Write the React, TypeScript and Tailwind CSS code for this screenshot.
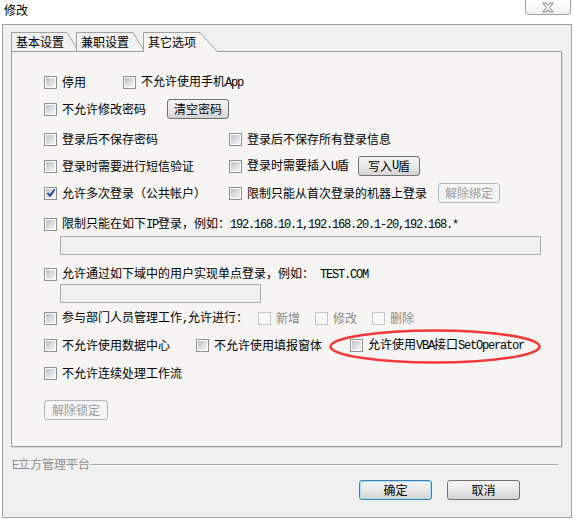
import clsx from "clsx"
import type { ReactNode } from "react"

// half-width latin, like the old bitmap font in the dialog
function M({ children }: { children: ReactNode }) {
  return <span className="font-['Liberation_Mono',monospace] text-[12px] tracking-[-1.2px]">{children}</span>
}

function Box({ checked, disabled }: { checked?: boolean; disabled?: boolean }) {
  if (disabled) {
    return <span className="block h-[13px] w-[13px] shrink-0 border border-[#c6c6c6] bg-[#f8f8f8]" />
  }
  return (
    <span className="relative flex h-[13px] w-[13px] shrink-0 items-center justify-center border border-[#8e8f8f] bg-white">
      <span className="block h-[9px] w-[9px] bg-linear-to-br from-[#b9bdc2] via-[#dcdde0] to-[#f5f5f5]" />
      {checked && (
        <svg className="absolute left-[1px] top-[0px]" width="10" height="10" viewBox="0 0 10 10">
          <path d="M1.5 5 L4 7.8 L8.8 1.2" fill="none" stroke="#1f3f9e" strokeWidth="1.8" />
        </svg>
      )}
    </span>
  )
}

function Check({ label, checked, disabled, className }: { label: ReactNode; checked?: boolean; disabled?: boolean; className?: string }) {
  return (
    <div className={clsx("flex shrink-0 items-center gap-[5px]", className)}>
      <Box checked={checked} disabled={disabled} />
      <span className={clsx("whitespace-nowrap", disabled ? "text-[#8a8a8a]" : "text-black")}>{label}</span>
    </div>
  )
}

function Btn({ children, disabled, primary, className }: { children: ReactNode; disabled?: boolean; primary?: boolean; className?: string }) {
  return (
    <div
      className={clsx(
        "flex h-[20px] shrink-0 items-center justify-center rounded-[3px] border text-[12px]",
        disabled
          ? "border-[#b4b7b9] bg-[#f4f4f4] text-[#9d9d9d]"
          : "bg-linear-to-b from-[#f4f4f4] via-[#e9e9e9] to-[#d3d3d3] text-black",
        !disabled && (primary ? "border-[#3c7fb1] shadow-[inset_0_0_0_1px_#a9dcf6]" : "border-[#707070]"),
        className,
      )}
    >
      {children}
    </div>
  )
}

function Tab({ label, width, slant, selected, className }: { label: string; width: number; slant: number; selected?: boolean; className?: string }) {
  const fillBottom = selected ? 20 : 19
  return (
    <div className={clsx("relative h-[20px] shrink-0", selected ? "z-20" : "z-10", className)} style={{ width }}>
      <svg className="absolute inset-0" width={width} height={20}>
        <path
          d={`M0.5 ${fillBottom} L0.5 0.5 L${width - slant} 0.5 L${width - 0.5} ${fillBottom}`}
          fill={selected ? "#f6f5f3" : "#f0f0f0"}
          stroke="#a0a0a0"
          strokeWidth="1"
        />
      </svg>
      <span className="relative block pl-[5px] pt-[2px] text-[12px] leading-[16px] text-black">{label}</span>
    </div>
  )
}

export default function App() {
  return (
    <div className="h-[521px] w-[574px] overflow-hidden bg-white font-['Noto_Sans_CJK_SC',sans-serif] text-[12px] text-black">
      {/* title bar */}
      <div className="flex h-[24px] items-start justify-between">
        <span className="pl-[4px] pt-[2px] text-[12px] leading-[16px]">修改</span>
        <div className="mr-[3px] flex h-[15px] w-[46px] items-center justify-center rounded-b-[4px] border border-t-0 border-[#a3a3a3] bg-linear-to-b from-white to-[#f1f1f1]">
          <svg width="12" height="11" viewBox="0 0 12 11">
            <path
              d="M1 1 L4 1 L6 3.5 L8 1 L11 1 L7.6 5.5 L11 10 L8 10 L6 7.5 L4 10 L1 10 L4.4 5.5 Z"
              fill="#fff"
              stroke="#6f6f6f"
              strokeWidth="0.9"
            />
          </svg>
        </div>
      </div>

      {/* window body */}
      <div className="ml-[2px] flex h-[494px] w-[570px] flex-col border border-[#a0a0a0] bg-[#f0f0f0] pl-[8px] pt-[7px]">
        <div className="flex h-[20px]">
          <Tab label="基本设置" width={68} slant={12} />
          <Tab label="兼职设置" width={69} slant={12} className="-ml-[3px]" />
          <Tab label="其它选项" width={75} slant={18} selected className="-ml-[2px]" />
        </div>

        <div className="relative -mt-[1px] h-[396px] w-[551px] border border-[#a0a0a0] bg-[#f6f5f3] pl-[32px] pt-[20px] shadow-[1px_1px_0_#d9d9d9]">
          <div className="flex flex-col">
            <div className="flex h-[20px] items-center">
              <Check label="停用" className="w-[79px]" />
              <Check label={<>不允许使用手机<M>App</M></>} />
            </div>

            <div className="mt-[7px] flex h-[20px] items-center">
              <Check label="不允许修改密码" className="w-[123px]" />
              <Btn className="w-[62px]">清空密码</Btn>
            </div>

            <div className="mt-[10px] flex h-[20px] items-center">
              <Check label="登录后不保存密码" className="w-[185px]" />
              <Check label="登录后不保存所有登录信息" />
            </div>

            <div className="mt-[7px] flex h-[20px] items-center">
              <Check label="登录时需要进行短信验证" className="w-[185px]" />
              <Check label={<>登录时需要插入<M>U</M>盾</>} />
              <Btn className="ml-[9px] w-[62px]">写入<M>U</M>盾</Btn>
            </div>

            <div className="mt-[7px] flex h-[20px] items-center">
              <Check label="允许多次登录（公共帐户）" checked className="w-[185px]" />
              <Check label="限制只能从首次登录的机器上登录" />
              <Btn disabled className="ml-[11px] w-[62px]">解除绑定</Btn>
            </div>

            <div className="mt-[11px] flex h-[20px] items-center">
              <Check
                label={
                  <>
                    限制只能在如下<M>IP</M>登录，例如：<M>192.168.10.1,192.168.20.1-20,192.168.*</M>
                  </>
                }
              />
            </div>
            <div className="ml-[16px] mt-[2px] h-[19px] w-[481px] border border-[#ababab] bg-[#f0f0f0]" />

            <div className="mt-[9px] flex h-[20px] items-center">
              <Check
                label={
                  <>
                    允许通过如下域中的用户实现单点登录，例如：<M> TEST.COM</M>
                  </>
                }
              />
            </div>
            <div className="ml-[16px] h-[19px] w-[201px] border border-[#ababab] bg-[#f0f0f0]" />

            <div className="mt-[5px] flex h-[20px] items-center">
              <Check label={<>参与部门人员管理工作<M>,</M>允许进行：</>} className="w-[214px]" />
              <Check label="新增" disabled className="w-[57px]" />
              <Check label="修改" disabled className="w-[57px]" />
              <Check label="删除" disabled />
            </div>

            <div className="mt-[7px] flex h-[20px] items-center">
              <Check label="不允许使用数据中心" className="w-[152px]" />
              <Check label="不允许使用填报窗体" className="w-[154px]" />
              <Check label={<>允许使用<M>VBA</M>接口<M>SetOperator</M></>} />
            </div>

            <div className="mt-[8px] flex h-[20px] items-center">
              <Check label="不允许连续处理工作流" />
            </div>

            <Btn disabled className="mt-[17px] w-[64px]">解除锁定</Btn>
          </div>

          {/* red annotation ring */}
          <svg className="pointer-events-none absolute left-[316px] top-[276px]" width="214" height="37" viewBox="0 0 214 37">
            <ellipse cx="107" cy="18.5" rx="104.5" ry="16" fill="none" stroke="#f23a3a" strokeWidth="2.6" />
          </svg>
        </div>

        {/* group line */}
        <div className="mt-[12px] flex h-[12px] items-center pl-[1px] pr-[13px]">
          <span className="whitespace-nowrap leading-[12px] text-[#8f8f8f]">
            <M>E</M>立方管理平台
          </span>
          <div className="h-[2px] flex-1 border-t border-b border-t-[#a8a8a8] border-b-white" />
        </div>

        <div className="mt-[9px] flex justify-end gap-[15px] pr-[51px]">
          <Btn primary className="w-[73px]">确定</Btn>
          <Btn className="w-[73px]">取消</Btn>
        </div>
      </div>
    </div>
  )
}
